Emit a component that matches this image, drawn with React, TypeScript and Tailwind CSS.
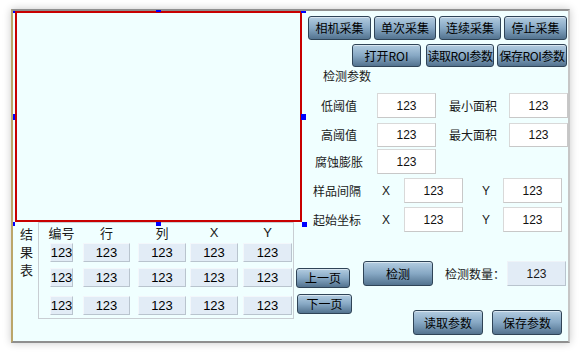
import React from 'react';

const Btn = ({ label, className = '' }: { label: string; className?: string }) => (
  <div
    className={`flex items-center justify-center whitespace-nowrap rounded-[3px] border border-[#2f4457] bg-linear-to-b from-[#b3cde1] via-[#87a8c4] to-[#53738f] text-[12px] leading-none text-black shadow-[inset_0_1px_0_rgba(255,255,255,0.5)] ${className}`}
  >
    {label}
  </div>
);

const Field = ({ className = '' }: { className?: string }) => (
  <div
    className={`flex h-full items-center justify-center border border-[#d9d9d9] border-b-[#c8c8c8] border-r-[#c8c8c8] bg-white font-['Liberation_Sans',sans-serif] text-[12px] text-[#111] ${className}`}
  >
    123
  </div>
);

const Cell = ({ className = '' }: { className?: string }) => (
  <div
    className={`flex h-[19px] items-center justify-center border border-[#f3f7fb] border-b-[#b9c4ce] border-r-[#b9c4ce] bg-[#e2ecf6] font-['Liberation_Sans',sans-serif] text-[13px] leading-none text-black ${className}`}
  >
    123
  </div>
);

const cols = ['ml-[11px] w-[23px]', 'ml-[10px] w-[47px]', 'ml-[8px] w-[48px]', 'ml-[4px] w-[48px]', 'ml-[5px] w-[49px]'];
const headers = ['编号', '行', '列', 'X', 'Y'];

// selection handles around the picture box
const handles = [
  'left-[-2px] top-0 w-[2px] h-[2px]',
  'left-[141px] top-[-1px] w-[5px] h-[2px]',
  'left-[286px] top-0 w-[5px] h-[2px]',
  'left-[-2px] top-[103px] w-[2px] h-[6px]',
  'left-[286px] top-[103px] w-[5px] h-[6px]',
  'left-[-2px] top-[211px] w-[2px] h-[4px]',
  'left-[141px] top-[211px] w-[5px] h-[4px]',
  'left-[287px] top-[211px] w-[5px] h-[5px]',
];

const ParamRow = ({ a, b, className }: { a: string; b?: string; className: string }) => (
  <div className={`flex items-center ${className}`}>
    <div className="ml-[7px] w-[54px] text-center">{a}</div>
    <Field className="ml-[11px] w-[59px]" />
    {b && (
      <>
        <div className="ml-[13px] w-[60px]">{b}</div>
        <Field className="w-[59px]" />
      </>
    )}
  </div>
);

const XYRow = ({ label, className }: { label: string; className: string }) => (
  <div className={`flex items-center ${className}`}>
    <div className="ml-[8px] w-[69px]">{label}</div>
    <div className="w-[22px] font-['Liberation_Sans',sans-serif] text-[12px]">X</div>
    <Field className="w-[59px]" />
    <div className="ml-[19px] w-[21px] font-['Liberation_Sans',sans-serif] text-[12px]">Y</div>
    <Field className="w-[59px]" />
  </div>
);

export default function App() {
  return (
    <div className="h-[352px] w-[580px] bg-white pl-[11px] pt-[9px] font-['Noto_Sans_CJK_SC',sans-serif] text-[12px] leading-none text-[#1a1a1a]">
      <div className="flex h-[334px] w-[559px] border-2 border-[#8f8f8f] border-l-[#bba66a] border-r-[#c6c6c6] bg-[#f0ffff] shadow-[0_0_8px_rgba(0,0,0,0.22)]">
        {/* left: picture + result table */}
        <div className="flex w-[292px] flex-col">
          <div className="relative ml-[2px] h-[211px] w-[287px]">
            <div className="h-full w-full border-2 border-[#c80000]" />
            {handles.map((h) => (
              <div key={h} className={`absolute bg-[#0000ff] ${h}`} />
            ))}
          </div>
          <div className="flex">
            <div className="flex w-[25px] flex-col pl-[7px] pt-[3px] text-[13px] leading-[18px]">
              <span>结</span>
              <span>果</span>
              <span>表</span>
            </div>
            <div className="h-[97px] w-[256px] border border-[#c9ced3]">
              <div className="mt-[1px] flex h-[16px] items-center">
                {headers.map((h, i) => (
                  <div
                    key={h}
                    className={`flex justify-center whitespace-nowrap text-[13px] ${cols[i]} ${i > 2 ? "font-['Liberation_Sans',sans-serif]" : ''}`}
                  >
                    {h}
                  </div>
                ))}
              </div>
              <div className="mt-[3px] flex">
                {cols.map((c) => (
                  <Cell key={c} className={c} />
                ))}
              </div>
              <div className="mt-[6px] flex">
                {cols.map((c) => (
                  <Cell key={c} className={c} />
                ))}
              </div>
              <div className="mt-[9px] flex">
                {cols.map((c) => (
                  <Cell key={c} className={c} />
                ))}
              </div>
            </div>
          </div>
        </div>

        {/* right: controls */}
        <div className="flex flex-1 flex-col">
          <div className="ml-[3px] mt-[5px] flex h-[24px] gap-[3px]">
            <Btn label="相机采集" className="w-[63px]" />
            <Btn label="单次采集" className="w-[62px]" />
            <Btn label="连续采集" className="w-[62px]" />
            <Btn label="停止采集" className="w-[63px]" />
          </div>
          <div className="ml-[47px] mt-[4px] flex h-[23px]">
            <Btn label="打开ROI" className="w-[69px]" />
            <Btn label="读取ROI参数" className="ml-[5px] w-[68px] tracking-[-0.4px]" />
            <Btn label="保存ROI参数" className="ml-[3px] w-[70px] tracking-[-0.4px]" />
          </div>
          <div className="ml-[18px] mt-[1px] h-[16px] leading-[16px]">检测参数</div>
          <ParamRow a="低阈值" b="最小面积" className="mt-[9px] h-[25px]" />
          <ParamRow a="高阈值" b="最大面积" className="mt-[5px] h-[24px]" />
          <ParamRow a="腐蚀膨胀" className="mt-[2px] h-[25px]" />
          <XYRow label="样品间隔" className="mt-[4px] h-[25px]" />
          <XYRow label="起始坐标" className="mt-[4px] h-[25px]" />
          <div className="flex">
            <div className="ml-[-9px] flex w-[56px] flex-col">
              <Btn label="上一页" className="mt-[36px] h-[20px] w-[54px]" />
              <Btn label="下一页" className="ml-[1px] mt-[6px] h-[20px] w-[55px]" />
            </div>
            <div className="ml-[11px] flex flex-col">
              <div className="mt-[29px] flex h-[25px] items-center">
                <Btn label="检测" className="h-full w-[70px]" />
                <div className="ml-[12px] w-[62px] whitespace-nowrap">检测数量：</div>
                <div className="flex h-full w-[59px] items-center justify-center border border-[#eef3f8] border-b-[#b9c4ce] border-r-[#b9c4ce] bg-[#e2ecf6] font-['Liberation_Sans',sans-serif] text-[12px]">
                  123
                </div>
              </div>
              <div className="ml-[50px] mt-[24px] flex h-[25px]">
                <Btn label="读取参数" className="w-[70px]" />
                <Btn label="保存参数" className="ml-[9px] w-[70px]" />
              </div>
            </div>
          </div>
        </div>
      </div>
    </div>
  );
}
